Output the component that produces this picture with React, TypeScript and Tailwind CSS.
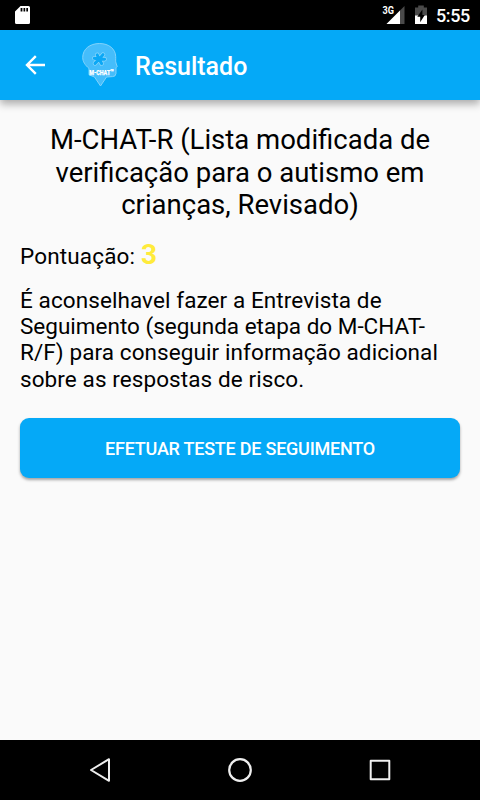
function StatusBar() {
  return (
    <header className="flex h-[30px] shrink-0 items-center bg-black text-white">
      <svg className="ml-[15px] h-[18px] w-[15px]" viewBox="0 0 15 18" fill="#fff">
        <path
          fillRule="evenodd"
          d="M5.5 0H13.5Q15 0 15 1.5V16.5Q15 18 13.5 18H1.5Q0 18 0 16.5V5.5ZM5.6 2V5.6H7.4V2ZM8.5 2V5.6H10.2V2ZM11.3 2V5.6H13V2Z"
        />
      </svg>
      <svg className="ml-auto h-[30px] w-[54px]" viewBox="0 0 54 30">
        <text x="0.5" y="14" fill="#fff" fontSize="10.5" fontWeight="700" fontFamily="Roboto" textLength="11.5" lengthAdjust="spacingAndGlyphs">3G</text>
        <path d="M22.5 6V24H4.5Z" fill="#4a4a4a" />
        <path d="M18 10.5V24H4.5Z" fill="#fff" />
        <path d="M36.2 5.5H41.8V7.5H45V24H33V7.5H36.2Z" fill="#4a4a4a" />
        <path d="M33 15.5H45V24H33Z" fill="#fff" />
        <path d="M40.4 9.5L35.3 16.8H38.2V22.3L42.8 14.9H40.4Z" fill="#000" />
      </svg>
      <span className="w-[44px] pt-[2px] text-[18px] leading-[30px] font-medium tracking-[-0.4px]">5:55</span>
    </header>
  );
}

const PIECE = "M17 17L15.2 12.8M17.8 16.5L21 12.6M18 17L22.6 17.2M17.3 17.5L19.6 21.6M16.8 17.5L13 21.4M16.5 17L12.4 16.2";

function Logo() {
  return (
    <svg className="ml-[36px] h-[46px] w-[36px] overflow-visible" viewBox="0 0 36 46">
      <path
        d="M17.5 1.5C27 1.5 33.5 7 33.7 14.5C33.8 17.5 33.4 19 34 21L35.2 24.5L34 25.8V31.5Q33.6 34.8 30.5 34.6L24.5 35L18.5 44L12.5 35L7 32.8V26.5C3 23 .7 19.5 .7 15.5C.7 7 8 1.5 17.5 1.5Z"
        fill="#45bdfb"
        stroke="#8bd6fb"
        strokeWidth=".9"
      />
      <g fill="none" strokeLinecap="round">
        <path d={PIECE} stroke="#8bd6fb" strokeWidth="4.4" />
        <path d={PIECE} stroke="#0ba8f6" strokeWidth="3" />
      </g>
      <text x="7.2" y="32.8" fill="#fff" stroke="#fff" strokeWidth=".25" fontFamily="Roboto" fontSize="8" fontWeight="900" textLength="24.5" lengthAdjust="spacingAndGlyphs">M-CHAT™</text>
    </svg>
  );
}

function AppBar() {
  return (
    <div className="z-10 flex h-[70px] shrink-0 items-center bg-[#05a9f7] text-white shadow-[0_4px_8px_rgba(0,0,0,0.32)]">
      <svg className="ml-[25px] h-[20px] w-[21px]" viewBox="0 0 21 20" fill="none" stroke="#fff" strokeWidth="2.4">
        <path d="M20 10H2.3M10.8 1.2L2 10L10.8 18.8" />
      </svg>
      <Logo />
      <h1 className="ml-[17px] pt-[4px] text-[25px] leading-[30px] font-medium">Resultado</h1>
    </div>
  );
}

function NavBar() {
  return (
    <nav className="flex h-[60px] shrink-0 items-center justify-center gap-[116px] bg-black">
      <svg className="size-6" viewBox="0 0 24 24" fill="none" stroke="#eee" strokeWidth="2" strokeLinejoin="round">
        <path d="M21 1.2V22.8L3 12Z" />
      </svg>
      <svg className="size-6" viewBox="0 0 24 24" fill="none" stroke="#eee" strokeWidth="2.2">
        <circle cx="12" cy="12" r="10.8" />
      </svg>
      <svg className="size-6" viewBox="0 0 24 24" fill="none" stroke="#eee" strokeWidth="2" strokeLinejoin="round">
        <rect x="2.7" y="2.7" width="18.6" height="18.6" />
      </svg>
    </nav>
  );
}

export default function App() {
  return (
    <div className="flex h-[800px] w-[480px] flex-col overflow-hidden bg-[#fafafa] font-[Roboto,sans-serif] text-black">
      <StatusBar />
      <AppBar />
      <main className="flex flex-1 flex-col px-5 pt-[24px]">
        <h2 className="text-center text-[27.5px] leading-[32.7px]">
          M-CHAT-R (Lista modificada de<br />verificação para o autismo em<br />crianças, Revisado)
        </h2>
        <p className="mt-[16.5px] text-[22.5px] leading-[32px] tracking-[0.16px]">
          Pontuação: <span className="text-[28px] font-bold text-[#ffeb3b]">3</span>
        </p>
        <p className="mt-[15px] text-[22.5px] leading-[26.3px] tracking-[0.09px]">
          É aconselhavel fazer a Entrevista de<br /><span className="tracking-normal">Seguimento (segunda etapa do M-CHAT-</span><br />R/F) para conseguir informação adicional<br />sobre as respostas de risco.
        </p>
        <button className="mt-[26px] h-[60px] rounded-[9px] bg-[#05a9f7] pt-[2px] text-[18px] font-medium tracking-[-0.23px] text-white shadow-[0_2px_3px_rgba(0,0,0,0.35)]">
          EFETUAR TESTE DE SEGUIMENTO
        </button>
      </main>
      <NavBar />
    </div>
  );
}
